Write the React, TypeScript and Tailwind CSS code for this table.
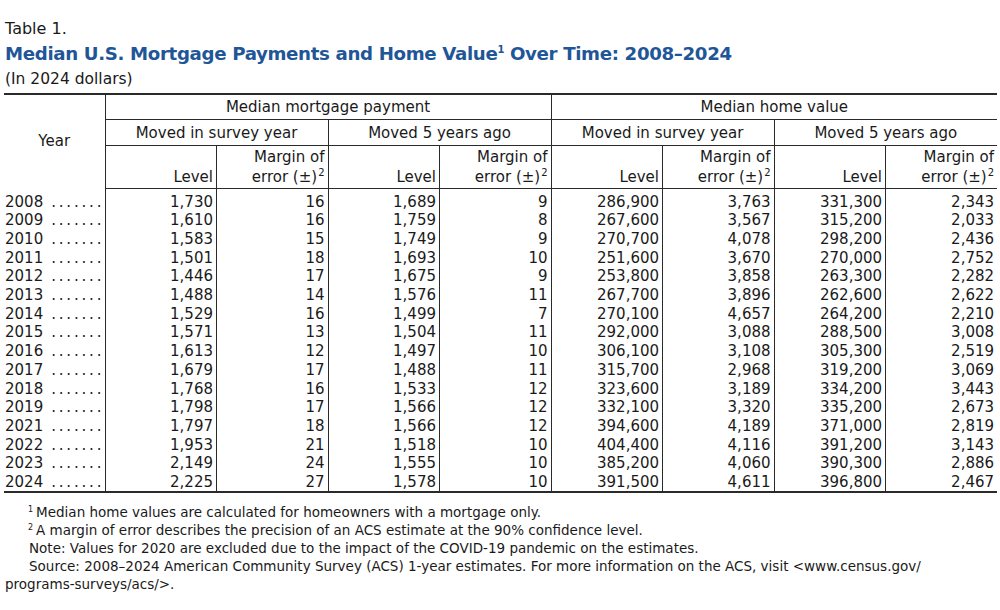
import React from 'react';

const rows: string[][] = [
  ['2008', '1,730', '16', '1,689', '9', '286,900', '3,763', '331,300', '2,343'],
  ['2009', '1,610', '16', '1,759', '8', '267,600', '3,567', '315,200', '2,033'],
  ['2010', '1,583', '15', '1,749', '9', '270,700', '4,078', '298,200', '2,436'],
  ['2011', '1,501', '18', '1,693', '10', '251,600', '3,670', '270,000', '2,752'],
  ['2012', '1,446', '17', '1,675', '9', '253,800', '3,858', '263,300', '2,282'],
  ['2013', '1,488', '14', '1,576', '11', '267,700', '3,896', '262,600', '2,622'],
  ['2014', '1,529', '16', '1,499', '7', '270,100', '4,657', '264,200', '2,210'],
  ['2015', '1,571', '13', '1,504', '11', '292,000', '3,088', '288,500', '3,008'],
  ['2016', '1,613', '12', '1,497', '10', '306,100', '3,108', '305,300', '2,519'],
  ['2017', '1,679', '17', '1,488', '11', '315,700', '2,968', '319,200', '3,069'],
  ['2018', '1,768', '16', '1,533', '12', '323,600', '3,189', '334,200', '3,443'],
  ['2019', '1,798', '17', '1,566', '12', '332,100', '3,320', '335,200', '2,673'],
  ['2021', '1,797', '18', '1,566', '12', '394,600', '4,189', '371,000', '2,819'],
  ['2022', '1,953', '21', '1,518', '10', '404,400', '4,116', '391,200', '3,143'],
  ['2023', '2,149', '24', '1,555', '10', '385,200', '4,060', '390,300', '2,886'],
  ['2024', '2,225', '27', '1,578', '10', '391,500', '4,611', '396,800', '2,467'],
];

const line = 'border-[#2a2a2a]';

// одна ячейка "Level" / "Margin of error"
const SubHead = ({ kind, last }: { kind: 'level' | 'moe'; last?: boolean }) => (
  <th
    className={`align-bottom text-right font-normal pr-[3px] pb-[1px] leading-[20px] border-t border-b ${line} ${
      last ? '' : 'border-r'
    }`}
  >
    {kind === 'level' ? (
      'Level'
    ) : (
      <>
        Margin of
        <br />
        error (±)<sup className="text-[10px] top-[-6px] ml-[1px]">2</sup>
      </>
    )}
  </th>
);

const groupHead = 'font-normal align-bottom pb-[2px] leading-[20px]';

export default function App() {
  return (
    <div
      className="w-[1000px] h-[610px] bg-white text-[#1a1a1a] px-[4px] pt-[19px]"
      style={{ fontFamily: '"DejaVu Sans", "Open Sans", sans-serif' }}
    >
      <div className="pl-[1px] text-[16px] leading-[20px]">Table 1.</div>
      <div className="pl-[1px] text-[18.2px] leading-[30px] font-bold text-[#1f5697] tracking-[-0.35px]">
        Median U.S. Mortgage Payments and Home Value<sup className="text-[10px] top-[-7px]">1</sup> Over Time: 2008–2024
      </div>
      <div className="pl-[1px] text-[15.5px] leading-[20px] mb-[4px]">(In 2024 dollars)</div>

      <table className="table-fixed border-collapse w-[993px] text-[15px]">
        <colgroup>
          <col className="w-[101px]" />
          {Array.from({ length: 8 }).map((_, i) => (
            <col key={i} className="w-[111.5px]" />
          ))}
        </colgroup>
        <thead>
          <tr className="h-[25px]">
            <th rowSpan={3} className={`font-normal align-middle border-t-2 border-r ${line}`}>
              Year
            </th>
            <th colSpan={4} className={`${groupHead} border-t-2 border-b border-r ${line}`}>
              Median mortgage payment
            </th>
            <th colSpan={4} className={`${groupHead} border-t-2 border-b ${line}`}>
              Median home value
            </th>
          </tr>
          <tr className="h-[26px]">
            <th colSpan={2} className={`${groupHead} border-b border-r ${line}`}>Moved in survey year</th>
            <th colSpan={2} className={`${groupHead} border-b border-r ${line}`}>Moved 5 years ago</th>
            <th colSpan={2} className={`${groupHead} border-b border-r ${line}`}>Moved in survey year</th>
            <th colSpan={2} className={`${groupHead} border-b ${line}`}>Moved 5 years ago</th>
          </tr>
          <tr className="h-[43px]">
            <SubHead kind="level" />
            <SubHead kind="moe" />
            <SubHead kind="level" />
            <SubHead kind="moe" />
            <SubHead kind="level" />
            <SubHead kind="moe" />
            <SubHead kind="level" />
            <SubHead kind="moe" last />
          </tr>
        </thead>
        <tbody className={`border-b-2 ${line}`}>
          {rows.map((r, ri) => (
            <tr key={r[0]} className={ri === 0 ? 'h-[23px] align-bottom' : 'h-[18.7px]'}>
              <td className={`border-r ${line} leading-[18px] pl-[1px]`}>
                <div className="flex">
                  <span>{r[0]}</span>
                  <span className="flex-1 flex justify-between pl-[8px] pr-[3px]">
                    {Array.from({ length: 7 }).map((_, i) => (
                      <span key={i}>.</span>
                    ))}
                  </span>
                </div>
              </td>
              {r.slice(1).map((v, ci) => (
                <td
                  key={ci}
                  className={`text-right pr-[3px] leading-[18px] ${ci < 7 ? `border-r ${line}` : ''}`}
                >
                  {v}
                </td>
              ))}
            </tr>
          ))}
        </tbody>
      </table>

      <div className="mt-[10px] text-[13.5px] leading-[18px]">
        <div className="pl-[24px]">
          <sup className="text-[8px] top-[-5px] mr-[3px]">1</sup>Median home values are calculated for homeowners with a mortgage only.
        </div>
        <div className="pl-[24px]">
          <sup className="text-[8px] top-[-5px] mr-[3px]">2</sup>A margin of error describes the precision of an ACS estimate at the 90% confidence level.
        </div>
        <div className="pl-[25px]">
          Note: Values for 2020 are excluded due to the impact of the COVID-19 pandemic on the estimates.
        </div>
        <div className="pl-[1px] indent-[24px]">
          Source: 2008–2024 American Community Survey (ACS) 1-year estimates. For more information on the ACS, visit &lt;www.census.gov/
          <br />
          programs-surveys/acs/&gt;.
        </div>
      </div>
    </div>
  );
}
